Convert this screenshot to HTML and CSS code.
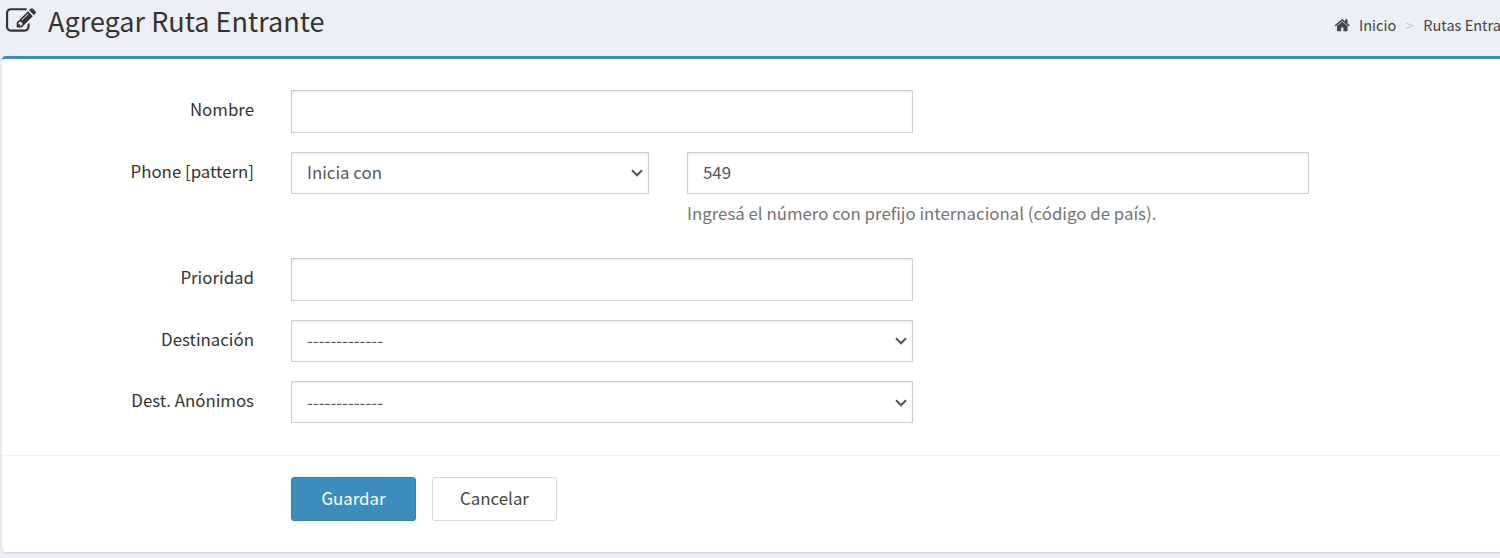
FILE: index.html
```html
<!DOCTYPE html>
<html lang="es">
<head>
<meta charset="utf-8">
<title>Agregar Ruta Entrante</title>
<link rel="stylesheet" href="styles.css">
</head>
<body>
<header class="content-header">
  <svg class="icon-edit" viewBox="0 0 1792 1792"><path d="M888 1184l116-116-152-152-116 116v56h96v96h56zm440-720q-16-16-33 1l-350 350q-17 17-1 33t33-1l350-350q17-17 1-33zm80 594v190q0 119-84.500 203.500t-203.500 84.500h-832q-119 0-203.500-84.500t-84.500-203.500v-832q0-119 84.500-203.500t203.500-84.500h832q63 0 117 25 15 7 18 23 3 17-9 29l-49 49q-14 14-32 8-23-6-45-6h-832q-66 0-113 47t-47 113v832q0 66 47 113t113 47h832q66 0 113-47t47-113v-126q0-13 9-22l64-64q15-15 35-7t20 29zm-96-738l288 288-672 672h-288v-288zm444 132l-92 92-288-288 92-92q28-28 68-28t68 28l152 152q28 28 28 68t-28 68z"/></svg>
  <h1 class="title">Agregar Ruta Entrante</h1>
  <nav class="breadcrumb">
    <svg class="icon-home" viewBox="0 0 1792 1792"><path d="M1472 992v480q0 26-19 45t-45 19h-384v-384h-256v384h-384q-26 0-45-19t-19-45v-480q0-1 .5-3t.5-3l575-474 575 474q1 2 1 6zm223-69l-62 74q-8 9-21 11h-3q-13 0-21-7l-692-577-692 577q-12 8-24 7-13-2-21-11l-62-74q-8-10-7-23.500t11-21.500l719-599q32-26 76-26t76 26l244 204v-195q0-14 9-23t23-9h192q14 0 23 9t9 23v408l219 182q10 8 11 21.500t-7 23.500z"/></svg>
    <span class="crumb">Inicio</span>
    <span class="separator">&gt;</span>
    <span class="crumb">Rutas Entrantes</span>
  </nav>
</header>
<form class="box">
  <div class="box-body">
    <div class="form-row">
      <label class="label" for="name">Nombre</label>
      <input class="control tall" id="name" type="text">
    </div>
    <div class="form-row phone-row">
      <label class="label" for="pattern">Phone [pattern]</label>
      <div class="select narrow">
        <select class="control" id="pattern"><option>Inicia con</option></select>
        <svg class="chevron" viewBox="0 0 12 8"><path d="M1 1.300l5 5 5-5"/></svg>
      </div>
      <div class="phone">
        <input class="control number" type="text" value="549">
        <p class="help">Ingresá el número con prefijo internacional (código de país).</p>
      </div>
    </div>
    <div class="form-row">
      <label class="label" for="priority">Prioridad</label>
      <input class="control tall" id="priority" type="text">
    </div>
    <div class="form-row">
      <label class="label" for="destination">Destinación</label>
      <div class="select">
        <select class="control" id="destination"><option>-------------</option></select>
        <svg class="chevron" viewBox="0 0 12 8"><path d="M1 1.300l5 5 5-5"/></svg>
      </div>
    </div>
    <div class="form-row last">
      <label class="label" for="anonymous">Dest. Anónimos</label>
      <div class="select">
        <select class="control" id="anonymous"><option>-------------</option></select>
        <svg class="chevron" viewBox="0 0 12 8"><path d="M1 1.300l5 5 5-5"/></svg>
      </div>
    </div>
  </div>
  <div class="box-footer">
    <button class="btn primary" type="button">Guardar</button>
    <button class="btn" type="button">Cancelar</button>
  </div>
</form>
</body>
</html>
```
FILE: styles.css
```css
* { box-sizing: border-box; }
body {
  margin: 0;
  height: 558px;
  overflow: hidden;
  background: #ecf0f5;
  color: #333;
  font: 16.85px/26px "Source Sans Pro", "Noto Sans CJK SC", sans-serif;
}
svg { display: block; flex: none; }
.content-header {
  height: 56px;
  display: flex;
  align-items: flex-start;
  padding-left: 6px;
  white-space: nowrap;
}
.icon-edit { width: 30px; height: 30px; margin-top: 6px; fill: #333; }
.title {
  margin: 3px 0 0 12px;
  font-size: 27.05px;
  line-height: 36px;
  font-weight: 400;
  width: 1286px;
  flex: none;
}
.breadcrumb {
  display: flex;
  flex: none;
  margin-top: 12px;
  font-size: 14.53px;
  color: #444;
}
.icon-home { width: 16.5px; height: 16.5px; margin: 5px 8.500px 0 0; fill: #444; }
.separator { width: 27px; text-align: center; color: #ccc; }
.box {
  width: 1520px;
  height: 496px;
  margin: 0 0 0 2px;
  background: #fff;
  border-top: 3px solid #3c8dbc;
  border-radius: 4px;
  box-shadow: 0 1px 2px rgba(0, 0, 0, .15);
}
.box-body { padding-top: 31px; height: 396px; }
.form-row {
  display: flex;
  align-items: flex-start;
  margin-bottom: 19px;
}
.phone-row { height: 87px; }
.label {
  width: 252px;
  margin-right: 37px;
  padding-top: 6px;
  text-align: right;
}
.control {
  display: block;
  width: 622px;
  height: 42px;
  margin: 0;
  padding: 0 15px 2px;
  border: 1px solid #ccc;
  border-radius: 0;
  background: #fff;
  box-shadow: inset 0 1px 2px rgba(0, 0, 0, .09);
  color: #555;
  font: inherit;
  appearance: none;
  outline: none;
}
.number { padding-bottom: 3px; }
.tall { height: 43px; }
.select { position: relative; width: 622px; }
.select .control { width: 100%; }
.select.narrow { width: 358px; margin-right: 38px; }
.chevron {
  position: absolute;
  right: 6.5px;
  top: 17px;
  width: 12px;
  height: 8px;
  fill: none;
  stroke: #555;
  stroke-width: 2;
}
.last .control { padding-bottom: 0; }
.last .chevron { top: 18px; }
.help { margin: 6px 0 0; color: #737373; }
.box-footer {
  display: flex;
  gap: 16px;
  padding: 21px 0 0 289px;
  border-top: 1px solid #f4f4f4;
}
.btn {
  width: 125px;
  height: 44px;
  padding: 0 0 2px;
  border: 1px solid #d2d6de;
  border-radius: 3px;
  background: #fff;
  color: #444;
  font: inherit;
}
.primary { background: #3c8dbc; border-color: #367fa9; color: #fff; }
```
